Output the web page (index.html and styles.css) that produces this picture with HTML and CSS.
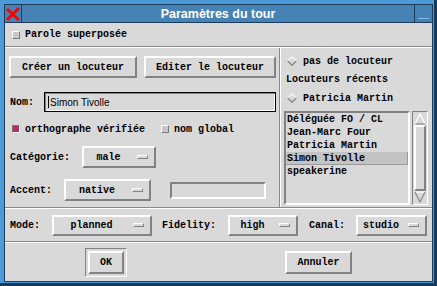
FILE: index.html
```html
<!DOCTYPE html>
<html lang="fr">
<head>
  <meta charset="UTF-8">
  <title>Paramètres du tour</title>
  <link rel="stylesheet" href="styles.css">
</head>
<body>
  <div class="window">
    <div class="frame">
      <div class="titlebar">
        <div class="close">
          <svg width="14" height="14" viewBox="0 0 14 14"><path d="M1 2 L13 13 M13 1 L1 13" stroke="#f00" stroke-width="3"/></svg>
        </div>
        <div class="title">Paramètres du tour</div>
        <div class="minbox"><span class="minline"></span></div>
      </div>

      <div class="content">
        <div class="toprow">
          <span class="check"></span><span>Parole superposée</span>
        </div>
        <div class="hgroove"></div>

        <div class="main">
          <div class="left">
            <div class="btnrow">
              <div class="btn btn-create">Créer un locuteur</div>
              <div class="btn btn-edit">Editer le locuteur</div>
            </div>
            <div class="row row-nom">
              <span class="lbl lbl-nom">Nom:</span>
              <div class="entry entry-nom"><span class="cursor"></span>Simon Tivolle</div>
            </div>
            <div class="row row-checks">
              <span class="check on"></span><span>orthographe vérifiée</span>
              <span class="check check-global"></span><span>nom global</span>
            </div>
            <div class="row row-cat">
              <span class="lbl lbl-cat">Catégorie:</span>
              <div class="mb mb-male"><span class="mbtext">male</span><span class="ind"></span></div>
            </div>
            <div class="row row-accent">
              <span class="lbl lbl-accent">Accent:</span>
              <div class="mb mb-native"><span class="mbtext">native</span><span class="ind"></span></div>
              <div class="entry-empty"></div>
            </div>
          </div>
          <div class="vgroove"></div>
          <div class="right">
            <div class="radio radio-first">
              <svg class="diamond" width="10" height="10" viewBox="0 0 10 10"><path d="M5 0 L10 5 L5 10 L0 5 Z" fill="#d9d9d9"/><path d="M0.7 5 L5 0.7 L9.3 5" fill="none" stroke="#f4f4f4" stroke-width="1.4"/><path d="M0.7 5 L5 9.3 L9.3 5" fill="none" stroke="#8a8a8a" stroke-width="1.4"/></svg>
              <span>pas de locuteur</span>
            </div>
            <div class="recent">Locuteurs récents</div>
            <div class="radio">
              <svg class="diamond" width="10" height="10" viewBox="0 0 10 10"><path d="M5 0 L10 5 L5 10 L0 5 Z" fill="#d9d9d9"/><path d="M0.7 5 L5 0.7 L9.3 5" fill="none" stroke="#f4f4f4" stroke-width="1.4"/><path d="M0.7 5 L5 9.3 L9.3 5" fill="none" stroke="#8a8a8a" stroke-width="1.4"/></svg>
              <span>Patricia Martin</span>
            </div>
            <div class="listwrap">
              <div class="listbox">
                <div class="item">Déléguée FO / CL</div>
                <div class="item">Jean-Marc Four</div>
                <div class="item">Patricia Martin</div>
                <div class="item selected">Simon Tivolle</div>
                <div class="item">speakerine</div>
              </div>
              <div class="scroll">
                <svg width="12" height="12" viewBox="0 0 12 12"><path d="M6 1 L11 11 L1 11 Z" fill="#d9d9d9"/><path d="M1 11 L6 1 L11 11" fill="none" stroke="#fff" stroke-width="1.2"/><path d="M1.5 11 L11 11" stroke="#8a8a8a" stroke-width="1.2"/></svg>
                <div class="slider"></div>
                <svg width="12" height="12" viewBox="0 0 12 12"><path d="M6 11 L11 1 L1 1 Z" fill="#d9d9d9"/><path d="M1 1 L11 1" stroke="#fff" stroke-width="1.2"/><path d="M1 1 L6 11 L11 1" fill="none" stroke="#8a8a8a" stroke-width="1.2"/></svg>
              </div>
            </div>
          </div>
        </div>
        <div class="hgroove"></div>

        <div class="moderow">
          <span class="lbl">Mode:</span>
          <div class="mb mb-planned"><span class="mbtext">planned</span><span class="ind"></span></div>
          <span class="lbl lbl-fid">Fidelity:</span>
          <div class="mb mb-high"><span class="mbtext">high</span><span class="ind"></span></div>
          <span class="lbl lbl-canal">Canal:</span>
          <div class="mb mb-studio"><span class="mbtext">studio</span><span class="ind"></span></div>
        </div>
        <div class="hgroove"></div>

        <div class="bottomrow">
          <div class="default-ring"><div class="btn btn-ok">OK</div></div>
          <div class="btn btn-cancel">Annuler</div>
        </div>
      </div>
    </div>
  </div>
</body>
</html>
```

FILE: styles.css
```css
* {
  box-sizing: border-box;
}
body {
  margin: 0;
  font: bold 10px "Liberation Mono", "DejaVu Sans Mono", monospace;
  color: #000;
}
.window {
  width: 437px;
  height: 286px;
  background: #4d9ad9;
  padding: 4px 4px 4px 4px;
  box-shadow: inset -3px -3px 0 #173a5c;
}
.frame {
  height: 100%;
  border: 1px solid #1d3c5c;
  display: flex;
  flex-direction: column;
}
.titlebar {
  height: 18px;
  background: #4682b4;
  display: flex;
  align-items: center;
  border-bottom: 1px solid #1d3c5c;
}
.close {
  width: 17px;
  height: 17px;
  border-right: 1px solid #1d3c5c;
  display: flex;
  align-items: center;
  justify-content: center;
}
.title {
  flex: 1;
  text-align: center;
  color: #fff;
  font: bold 12.5px "Liberation Sans", Arial, sans-serif;
}
.minbox {
  width: 18px;
  height: 17px;
  border-left: 1px solid #1d3c5c;
  position: relative;
}
.minline {
  position: absolute;
  left: 3px;
  right: 3px;
  bottom: 3px;
  height: 1px;
  background: #7fbff0;
}
.content {
  flex: 1;
  background: #d9d9d9;
  display: flex;
  flex-direction: column;
}
.toprow {
  height: 23px;
  display: flex;
  align-items: center;
  padding-left: 7px;
}
.hgroove {
  height: 2px;
  border-top: 1px solid #8a8a8a;
  border-bottom: 1px solid #fff;
}
.check {
  width: 8px;
  height: 8px;
  margin-right: 5px;
  background: #c8c8c8;
  border: 1px solid;
  border-color: #fff #7a7a7a #7a7a7a #fff;
}
.check.on {
  background: #b03060;
  border-color: #7a7a7a #fff #fff #7a7a7a;
}
.check-global {
  margin-left: 16px;
}
.main {
  height: 159px;
  display: flex;
}
.left {
  width: 274px;
  padding: 8px 0 0 4px;
}
.vgroove {
  width: 2px;
  border-left: 1px solid #8a8a8a;
  border-right: 1px solid #fff;
}
.right {
  flex: 1;
  padding: 6px 0 0 0;
}
.btnrow {
  display: flex;
  gap: 7px;
}
.btn {
  height: 22px;
  display: flex;
  align-items: center;
  justify-content: center;
  background: #d9d9d9;
  border: 2px solid;
  border-color: #fff #828282 #828282 #fff;
}
.btn-create {
  width: 128px;
}
.btn-edit {
  width: 132px;
}
.row {
  display: flex;
  align-items: center;
  padding-left: 1px;
}
.row-nom {
  margin-top: 14px;
}
.lbl-nom {
  width: 34px;
}
.entry {
  width: 232px;
  height: 20px;
  border: 1px solid #000;
  box-shadow: inset 1px 1px 0 #828282, inset -1px -1px 0 #fff;
  display: flex;
  align-items: center;
  padding-left: 3px;
  font: 10px "Liberation Sans", Arial, sans-serif;
}
.cursor {
  width: 1px;
  height: 12px;
  background: #000;
  margin-right: 1px;
}
.row-checks {
  margin-top: 11px;
  height: 12px;
  padding-left: 3px;
}
.row-cat {
  margin-top: 11px;
}
.lbl-cat {
  width: 72px;
}
.row-accent {
  margin-top: 11px;
}
.lbl-accent {
  width: 54px;
}
.mb {
  height: 22px;
  display: flex;
  align-items: center;
  padding: 0 6px 0 2px;
  border: 2px solid;
  border-color: #fff #828282 #828282 #fff;
}
.mbtext {
  flex: 1;
  text-align: center;
}
.ind {
  width: 11px;
  height: 4px;
  margin-left: 6px;
  border: 1px solid;
  border-color: #fff #828282 #828282 #fff;
}
.mb-male {
  width: 74px;
}
.mb-native {
  width: 87px;
}
.entry-empty {
  width: 96px;
  height: 17px;
  margin-left: 19px;
  border: 2px solid;
  border-color: #828282 #fff #fff #828282;
}
.radio {
  height: 14px;
  display: flex;
  align-items: center;
  padding-left: 6px;
  margin-top: 4px;
}
.radio-first {
  margin-top: 0;
}
.diamond {
  margin-right: 6px;
}
.recent {
  height: 14px;
  line-height: 14px;
  padding-left: 5px;
  margin-top: 5px;
}
.listwrap {
  display: flex;
  margin: 6px 0 0 3px;
  height: 94px;
}
.listbox {
  width: 126px;
  border: 2px solid;
  border-color: #828282 #fff #fff #828282;
  padding-top: 0;
}
.item {
  height: 13px;
  line-height: 13px;
  padding-left: 1px;
  white-space: nowrap;
}
.item.selected {
  background: #c3c3c3;
  box-shadow: inset -1px -1px 0 #9a9a9a;
}
.scroll {
  width: 16px;
  margin-left: 2px;
  border: 1px solid;
  border-color: #828282 #fff #fff #828282;
  display: flex;
  flex-direction: column;
  align-items: center;
  padding: 1px 0;
}
.slider {
  flex: 1;
  width: 12px;
  border: 2px solid;
  border-color: #fff #828282 #828282 #fff;
}
.moderow {
  height: 32px;
  display: flex;
  align-items: center;
  padding-left: 5px;
}
.moderow .mb {
  height: 21px;
}
.mb-planned {
  width: 100px;
  margin-left: 12px;
}
.lbl-fid {
  margin-left: 10px;
}
.mb-high {
  width: 70px;
  margin-left: 12px;
}
.lbl-canal {
  margin-left: 11px;
}
.mb-studio {
  width: 71px;
  margin-left: 11px;
}
.bottomrow {
  flex: 1;
  display: flex;
  align-items: center;
  padding-left: 80px;
}
.default-ring {
  padding: 2px;
  border: 1px solid;
  border-color: #828282 #fff #fff #828282;
}
.btn-ok {
  width: 36px;
  height: 23px;
}
.btn-cancel {
  width: 67px;
  height: 23px;
  margin-left: 158px;
}
```
